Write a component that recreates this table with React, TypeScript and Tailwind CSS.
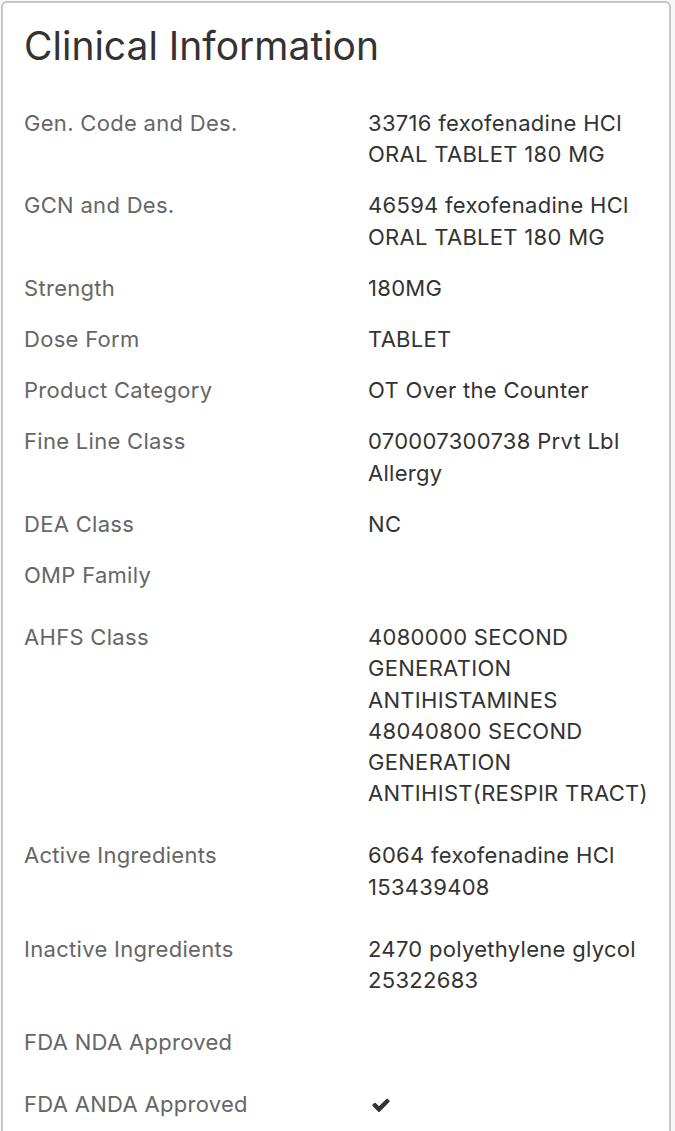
import React from 'react';

type Row = { label: string; value?: React.ReactNode; gap: 'sm' | 'lg' };

const CheckIcon: React.FC = () => (
  <svg viewBox="0 0 1792 1792" className="h-[20px] w-[20px]" fill="#333">
    <path d="M1671 566q0 40-28 68l-724 724-136 136q-28 28-68 28t-68-28l-136-136-362-362q-28-28-28-68t28-68l136-136q28-28 68-28t68 28l294 295 656-657q28-28 68-28t68 28l136 136q28 28 28 68z" />
  </svg>
);

const rows: Row[] = [
  { label: 'Gen. Code and Des.', value: '33716 fexofenadine HCl ORAL TABLET 180 MG', gap: 'sm' },
  { label: 'GCN and Des.', value: '46594 fexofenadine HCl ORAL TABLET 180 MG', gap: 'sm' },
  { label: 'Strength', value: '180MG', gap: 'sm' },
  { label: 'Dose Form', value: 'TABLET', gap: 'sm' },
  { label: 'Product Category', value: 'OT Over the Counter', gap: 'sm' },
  { label: 'Fine Line Class', value: '070007300738 Prvt Lbl Allergy', gap: 'sm' },
  { label: 'DEA Class', value: 'NC', gap: 'sm' },
  { label: 'OMP Family', gap: 'lg' },
  {
    label: 'AHFS Class',
    value: (
      <>
        4080000 SECOND GENERATION ANTIHISTAMINES
        <br />
        48040800 SECOND GENERATION ANTIHIST(RESPIR TRACT)
      </>
    ),
    gap: 'lg',
  },
  { label: 'Active Ingredients', value: '6064 fexofenadine HCl 153439408', gap: 'lg' },
  { label: 'Inactive Ingredients', value: '2470 polyethylene glycol 25322683', gap: 'lg' },
  { label: 'FDA NDA Approved', gap: 'lg' },
  {
    label: 'FDA ANDA Approved',
    value: (
      <span className="flex h-[31px] items-center pl-[3px]">
        <CheckIcon />
      </span>
    ),
    gap: 'lg',
  },
];

const App: React.FC = () => {
  return (
    <div className="min-h-screen bg-[#f6f6f6] pl-px pr-[4px] pt-px" style={{ fontFamily: 'Inter, sans-serif' }}>
      <div className="rounded-md border-2 border-[#c6c6c6] bg-white px-[21px] pb-10 pt-[21px]">
        <h2 className="mb-[40px] text-[39px] leading-[44px] text-[#333]">Clinical Information</h2>

        <div>
          {rows.map((row, i) => (
            <div
              key={i}
              className={`grid grid-cols-[344px_285px] text-[22px] leading-[31.2px] tracking-[0.3px] ${row.gap === 'sm' ? 'mb-[20px]' : 'mb-[31px]'}`}
            >
              <div className="text-[#666]">{row.label}</div>
              <div className="text-[#333]">{row.value}</div>
            </div>
          ))}
        </div>
      </div>
    </div>
  );
};

export default App;
